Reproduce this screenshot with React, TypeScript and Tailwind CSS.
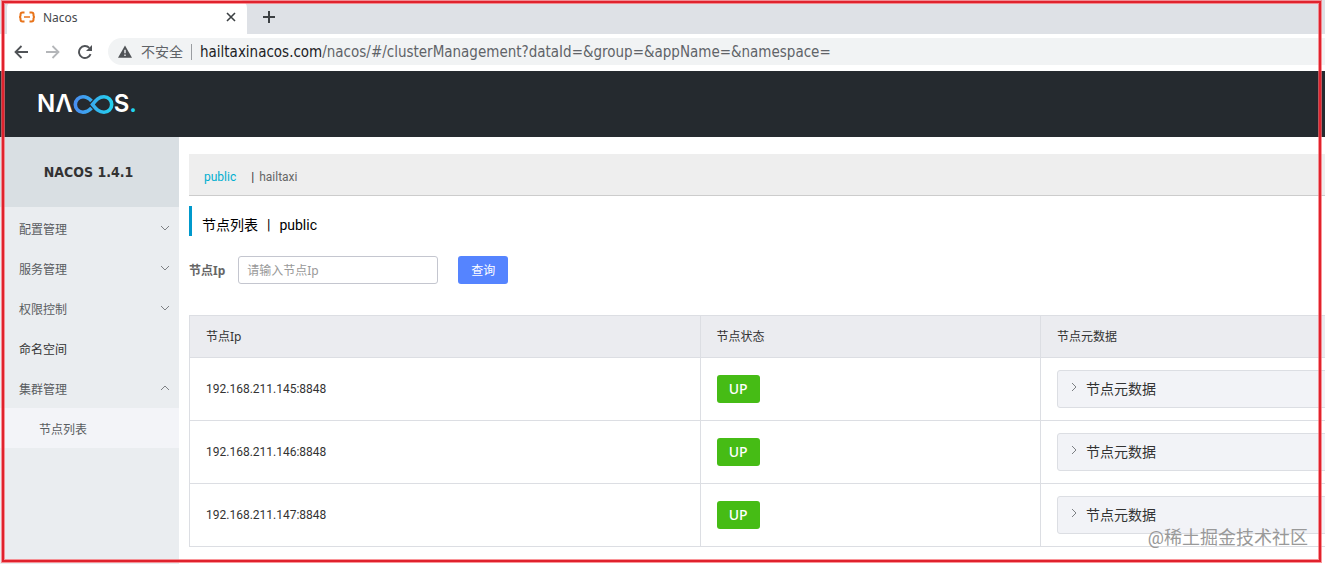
import { useState } from "react";

const PAGE_FONT = "font-[Roboto,'Noto_Sans_CJK_SC',sans-serif]";
const LABEL_FONT = "font-['Noto_Sans','Noto_Sans_CJK_SC',sans-serif]";
const WIDE_FONT = "font-['DejaVu_Sans_Condensed','Noto_Sans','Noto_Sans_CJK_SC',sans-serif]";

interface ClusterNode {
  ip: string;
  status: string;
}

const nodes: ClusterNode[] = [
  { ip: "192.168.211.145:8848", status: "UP" },
  { ip: "192.168.211.146:8848", status: "UP" },
  { ip: "192.168.211.147:8848", status: "UP" },
];

const menu = [
  { label: "配置管理", arrow: "down" },
  { label: "服务管理", arrow: "down" },
  { label: "权限控制", arrow: "down" },
  { label: "命名空间", arrow: "" },
  { label: "集群管理", arrow: "up" },
];

function Chevron({ dir }: { dir: string }) {
  const d =
    dir === "down" ? "M1 3l4 4 4-4" : dir === "up" ? "M1 7l4-4 4 4" : "M3 1l4 4-4 4";
  return (
    <svg width="10" height="10" viewBox="0 0 10 10" fill="none" stroke="#7d8084" className="mb-1" aria-hidden="true">
      <path d={d} />
    </svg>
  );
}

function BrowserChrome() {
  return (
    <div className={`shrink-0 bg-white ${LABEL_FONT}`}>
      <div className="flex h-[34px] items-end bg-[#dee1e6] pl-[7px]">
        <div className="flex h-[34px] w-60 items-center rounded-t-lg bg-white pr-[9px] pl-3">
          <svg width="16" height="12" viewBox="0 0 16 12" fill="none" stroke="#e8731a" strokeWidth="2" aria-hidden="true">
            <path d="M5.500 1.500H3.500Q1.500 1.500 1.500 3.500V4.500L1 6l.5 1.500V8.500Q1.500 10.500 3.500 10.500H5.500M10.500 1.500H12.500Q14.500 1.500 14.500 3.500V4.500L15 6l-.5 1.500V8.500Q14.500 10.500 12.500 10.500H10.500" />
            <path d="M5 6h6" strokeWidth="1.500" />
          </svg>
          <span className="ml-2 flex-1 pt-0.5 text-xs text-[#45484c]">Nacos</span>
          <button type="button" aria-label="关闭标签页" className="p-0.5">
            <svg width="10" height="10" viewBox="0 0 10 10" stroke="#3c4043" strokeWidth="1.600" aria-hidden="true">
              <path d="M1 1l8 8M9 1l-8 8" />
            </svg>
          </button>
        </div>
        <div className="flex h-[34px] flex-1 items-center pl-4">
          <button type="button" aria-label="新标签页">
            <svg width="12" height="12" viewBox="0 0 12 12" stroke="#3c4043" strokeWidth="2" aria-hidden="true">
              <path d="M6 0v12M0 6h12" />
            </svg>
          </button>
        </div>
      </div>
      <div className="flex h-[37px] items-center pb-0.5 pl-3">
        <button type="button" aria-label="后退" className="p-0.5">
          <svg width="14" height="14" viewBox="0 0 14 14" fill="none" stroke="#505357" strokeWidth="1.800" aria-hidden="true">
            <path d="M14 7H1.500M7.500 1l-6 6 6 6" />
          </svg>
        </button>
        <button type="button" aria-label="前进" className="ml-3.5 p-0.5">
          <svg width="14" height="14" viewBox="0 0 14 14" fill="none" stroke="#b4b6b9" strokeWidth="1.800" aria-hidden="true">
            <path d="M0 7h12.500M6.500 1l6 6-6 6" />
          </svg>
        </button>
        <button type="button" aria-label="刷新" className="ml-3.5 p-0.5">
          <svg width="14" height="14" viewBox="0 0 14 14" aria-hidden="true">
            <path d="M12.600 9.200A6 6 0 1 1 11.300 2.800" fill="none" stroke="#505357" strokeWidth="1.900" />
            <path d="M14 0v6H8z" fill="#505357" />
          </svg>
        </button>
        <div className="ml-3.5 flex h-[27px] flex-1 items-center rounded-l-full bg-[#f1f3f4] pl-2.5 text-sm text-[#5f6368]">
          <svg width="14" height="13" viewBox="0 0 16 14" aria-hidden="true">
            <path d="M8 0l8 14H0z" fill="#505357" />
            <path d="M7.200 5h1.600v4H7.200zM7.200 10.500h1.600v1.600H7.200z" fill="#f1f3f4" />
          </svg>
          <span className="ml-[9px]">不安全</span>
          <span className="mx-2 h-4 w-px bg-[#9a9da1]" />
          <span className={`pt-0.5 text-[15px] whitespace-nowrap ${WIDE_FONT}`}>
            <span className="text-[#202124]">hailtaxinacos.com</span>
            /nacos/#/clusterManagement?dataId=&amp;group=&amp;appName=&amp;namespace=
          </span>
        </div>
      </div>
    </div>
  );
}

function Logo() {
  return (
    <a href="#/" aria-label="NACOS" className="flex items-center font-[Inter,sans-serif] text-2xl leading-6 font-semibold text-white">
      <span>N</span>
      <span>Λ</span>
      <svg width="41" height="19" viewBox="0 0 41 19" fill="none" strokeWidth="3.600" aria-hidden="true">
        <defs>
          <linearGradient id="loop" gradientUnits="userSpaceOnUse" x1="0" x2="41" y1="0" y2="0">
            <stop offset="0" stopColor="#4a8bf0" />
            <stop offset="1" stopColor="#22d3ee" />
          </linearGradient>
        </defs>
        <g stroke="url(#loop)">
          <path d="M18.500 6C16 3.200 13.800 1.800 10 1.800A7.700 7.700 0 0 0 10 17.200C13.800 17.200 16 15.800 18.500 13" />
          <path d="M19.500 9.500C23 5.200 25.500 1.800 31 1.800A7.700 7.700 0 0 1 31 17.200C25.500 17.200 23 13.800 19.500 9.500z" />
        </g>
      </svg>
      <span>S</span>
      <span className="text-[#22d3ee]">.</span>
    </a>
  );
}

function Sidebar() {
  return (
    <nav className="w-[179px] shrink-0 bg-[#eaedf0] text-xs text-[#595c60]">
      <h1 className={`flex h-[70px] items-center justify-center bg-[#d9dfe3] pr-0.5 text-sm font-bold text-[#333] ${WIDE_FONT}`}>
        NACOS 1.4.1
      </h1>
      <ul className="pt-px">
        {menu.map((item) => (
          <li key={item.label}>
            <a
              href="#/"
              className={`flex h-10 items-center justify-between pt-1 pr-[9px] pl-[19px] ${item.arrow ? "" : "text-[#333]"}`}
            >
              {item.label}
              {item.arrow && <Chevron dir={item.arrow} />}
            </a>
          </li>
        ))}
        <li>
          <a href="#/clusterManagement" className="flex h-10 items-center bg-[#f3f4f8] pt-1 pl-[39px]">
            节点列表
          </a>
        </li>
      </ul>
    </nav>
  );
}

function NodeTable() {
  return (
    <table className="w-[1703px] table-fixed border-collapse text-left text-xs text-[#333]">
      <thead>
        <tr className={`h-[42px] bg-[#ebecf0] ${LABEL_FONT}`}>
          <th className="w-[30%] border border-[#dcdee3] px-4 font-normal">节点Ip</th>
          <th className="w-[20%] border border-[#dcdee3] px-4 font-normal">节点状态</th>
          <th className="w-1/2 border border-[#dcdee3] px-4 font-normal">节点元数据</th>
        </tr>
      </thead>
      <tbody>
        {nodes.map((node) => (
          <tr key={node.ip} className="h-[63px]">
            <td className="border border-[#dcdee3] px-4">{node.ip}</td>
            <td className="border border-[#dcdee3] px-4">
              <span
                className={`inline-flex h-7 w-[43px] items-center justify-center rounded-[3px] bg-[#46bc15] align-middle text-sm font-medium text-white ${LABEL_FONT}`}
              >
                {node.status}
              </span>
            </td>
            <td className="border border-[#dcdee3] px-4">
              <button
                type="button"
                className="flex h-[38px] w-full items-center gap-[7px] rounded-[3px] border border-[#dcdee3] bg-[#f2f3f7] pl-[11px] text-sm"
              >
                <Chevron dir="right" />
                节点元数据
              </button>
            </td>
          </tr>
        ))}
      </tbody>
    </table>
  );
}

export default function App() {
  const [ip, setIp] = useState("");

  return (
    <div className={`relative flex min-h-screen flex-col overflow-hidden bg-white ${PAGE_FONT}`}>
      <BrowserChrome />
      <header className="flex h-[66px] shrink-0 items-center bg-[#252a2f] pl-[37px]">
        <Logo />
      </header>
      <div className="flex flex-1">
        <Sidebar />
        <main className="min-w-0 flex-1 overflow-hidden pt-[17px] pl-2.5">
          <div className="flex h-[42px] items-center border-b border-[#ccc] bg-[#eee] pt-1 pl-[15px] text-xs text-[#666]">
            <a href="#/public" className="text-[#00aed0]">public</a>
            <span className="mr-[5px] ml-[15px] text-[#333]">|</span>
            <a href="#/hailtaxi">hailtaxi</a>
          </div>
          <h2 className="mt-2.5 flex h-[30px] items-center gap-[9px] border-l-[3px] border-[#09c] pt-2 pl-2.5 text-sm text-black">
            <span>节点列表</span>
            <span>|</span>
            <span>public</span>
          </h2>
          <form className="mt-5 flex h-7 items-center text-xs" onSubmit={(e) => e.preventDefault()}>
            <label htmlFor="ip" className={`pt-0.5 font-bold text-[#666] ${LABEL_FONT}`}>节点Ip</label>
            <input
              id="ip"
              type="text"
              value={ip}
              onChange={(e) => setIp(e.target.value)}
              placeholder="请输入节点Ip"
              className={`ml-[13px] h-7 w-50 rounded-[3px] border border-[#c4c6cf] bg-white px-2 placeholder:text-[#999] ${LABEL_FONT}`}
            />
            <button type="submit" className="ml-5 h-7 w-[50px] rounded-[3px] bg-[#5584ff] pt-0.5 text-white">
              查询
            </button>
          </form>
          <div className="mt-[31px]">
            <NodeTable />
          </div>
        </main>
      </div>
      <div className="absolute right-[17px] bottom-3 text-lg leading-7 text-[#999]">@稀土掘金技术社区</div>
      <div className="pointer-events-none absolute top-px right-1 bottom-0.5 left-0.5 border-2 border-[#e0222d] ring-1 ring-[#f8696f]/70 inset-ring-1 inset-ring-[#f8696f]/70" />
    </div>
  );
}
